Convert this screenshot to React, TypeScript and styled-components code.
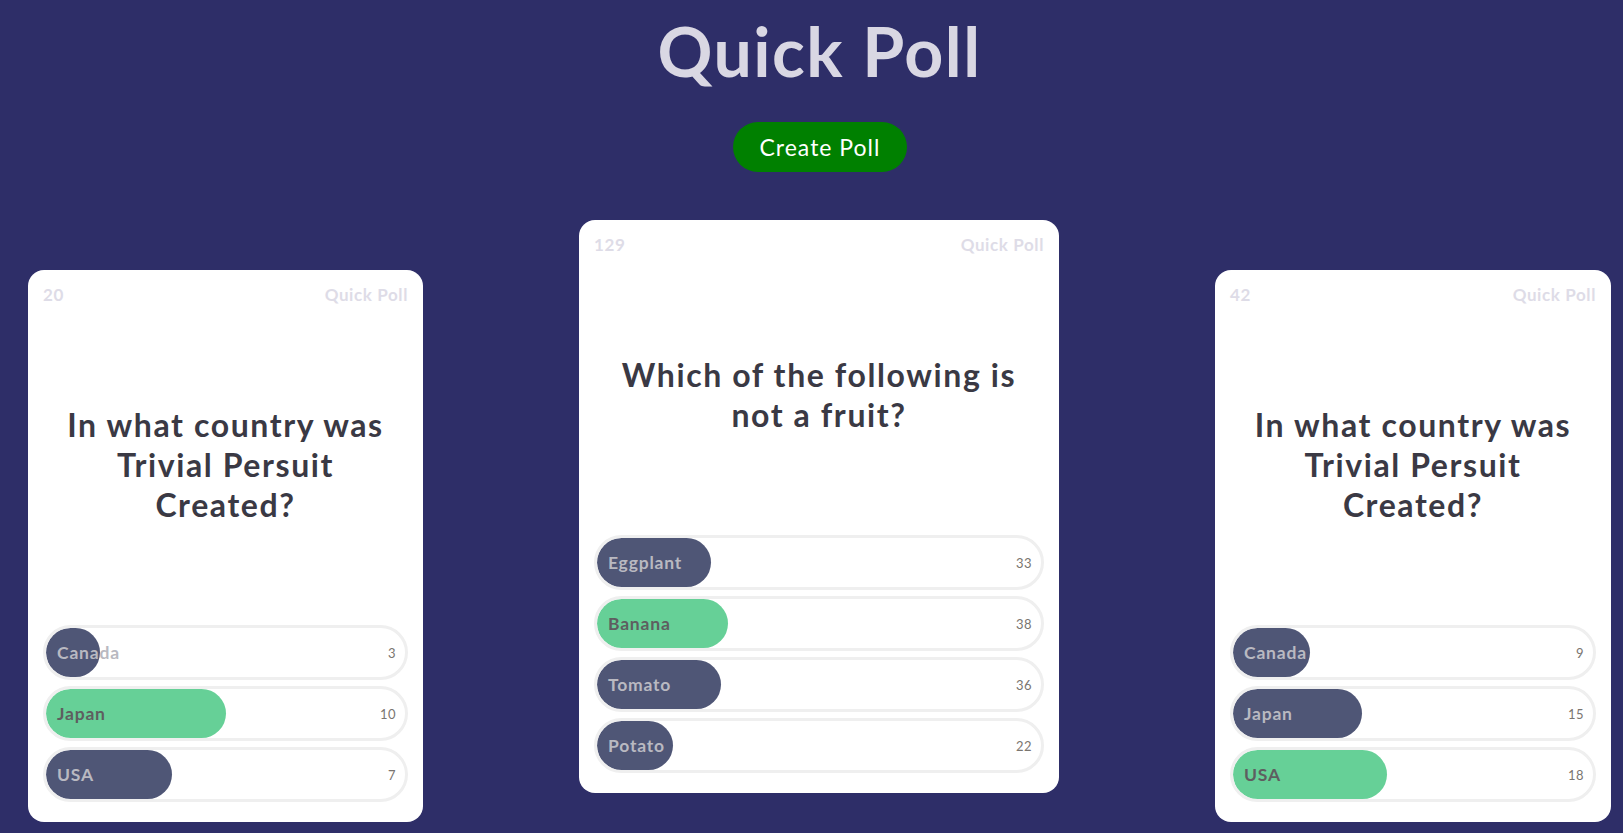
import React from "react";
import styled, { createGlobalStyle } from "styled-components";

const GlobalStyle = createGlobalStyle`
  html, body {
    margin: 0;
    padding: 0;
    background: #2e2e68;
    font-family: "Lato", "Noto Sans", sans-serif;
  }
  * { box-sizing: border-box; }
`;

const Page = styled.div`
  display: flex;
  flex-direction: column;
  align-items: center;
  min-height: 833px;
  overflow: hidden;
`;

const Title = styled.h1`
  margin: 11px 0 0 16px;
  font-size: 68px;
  line-height: 80px;
  font-weight: 700;
  color: #d9d7e3;
  letter-spacing: 1.5px;
`;

const CreateButton = styled.button`
  margin: 31px 0 0 17px;
  height: 50px;
  padding: 0 27px;
  border: none;
  border-radius: 25px;
  background: #008000;
  color: #ffffff;
  font-family: inherit;
  font-size: 23px;
  font-weight: 400;
  letter-spacing: 1px;
  cursor: pointer;
`;

const CardRow = styled.div`
  width: 100%;
  display: flex;
  align-items: flex-start;
  justify-content: space-between;
  padding: 0 12px 0 28px;
  margin-top: 48px;
`;

const Card = styled.div<{ $w: number; $h: number; $top: number }>`
  width: ${(p) => p.$w}px;
  height: ${(p) => p.$h}px;
  margin-top: ${(p) => p.$top}px;
  background: #ffffff;
  border-radius: 16px;
  display: flex;
  flex-direction: column;
  padding: 15px 15px 20px;
`;

const CardHeader = styled.div`
  display: flex;
  justify-content: space-between;
  font-size: 17px;
  font-weight: 700;
  line-height: 20px;
  letter-spacing: 0.6px;
  color: #dedce7;
`;

const QuestionArea = styled.div`
  flex: 1;
  display: flex;
  align-items: center;
  justify-content: center;
`;

const Question = styled.h2<{ $max: number }>`
  margin: 0;
  max-width: ${(p) => p.$max}px;
  text-align: center;
  font-size: 32px;
  line-height: 40px;
  font-weight: 700;
  letter-spacing: 1.6px;
  color: #3a3944;
`;

const Options = styled.div`
  display: flex;
  flex-direction: column;
  gap: 6px;
`;

const OptionRow = styled.div`
  position: relative;
  height: 55px;
  border: 3px solid #efefef;
  border-radius: 999px;
  display: flex;
  align-items: center;
  overflow: hidden;
`;

const Fill = styled.div<{ $win: boolean }>`
  position: absolute;
  left: 0;
  top: 0;
  bottom: 0;
  border-radius: 999px;
  background: ${(p) => (p.$win ? "#66d097" : "#4f5676")};
`;

const OptionLabel = styled.span<{ $win: boolean }>`
  position: relative;
  padding-left: 11px;
  font-size: 17.5px;
  font-weight: 700;
  letter-spacing: 0.8px;
  color: ${(p) => (p.$win ? "#5e5e60" : "#b9b9c1")};
`;

const OptionCount = styled.span`
  position: relative;
  margin-left: auto;
  padding-right: 9px;
  font-size: 13px;
  letter-spacing: 0.4px;
  color: #7a7570;
`;

type Poll = {
  total: number;
  question: string;
  max: number;
  options: { label: string; votes: number }[];
  w: number;
  h: number;
  top: number;
};

const polls: Poll[] = [
  {
    total: 20,
    question: "In what country was Trivial Persuit Created?",
    max: 335,
    options: [
      { label: "Canada", votes: 3 },
      { label: "Japan", votes: 10 },
      { label: "USA", votes: 7 },
    ],
    w: 395,
    h: 552,
    top: 50,
  },
  {
    total: 129,
    question: "Which of the following is not a fruit?",
    max: 420,
    options: [
      { label: "Eggplant", votes: 33 },
      { label: "Banana", votes: 38 },
      { label: "Tomato", votes: 36 },
      { label: "Potato", votes: 22 },
    ],
    w: 480,
    h: 573,
    top: 0,
  },
  {
    total: 42,
    question: "In what country was Trivial Persuit Created?",
    max: 335,
    options: [
      { label: "Canada", votes: 9 },
      { label: "Japan", votes: 15 },
      { label: "USA", votes: 18 },
    ],
    w: 396,
    h: 552,
    top: 50,
  },
];

function PollCard({ poll }: { poll: Poll }) {
  const best = Math.max(...poll.options.map((o) => o.votes));
  return (
    <Card $w={poll.w} $h={poll.h} $top={poll.top}>
      <CardHeader>
        <span>{poll.total}</span>
        <span>Quick Poll</span>
      </CardHeader>
      <QuestionArea>
        <Question $max={poll.max}>{poll.question}</Question>
      </QuestionArea>
      <Options>
        {poll.options.map((o) => {
          const win = o.votes === best;
          return (
            <OptionRow key={o.label}>
              <Fill $win={win} style={{ width: `${(o.votes / poll.total) * 100}%` }} />
              <OptionLabel $win={win}>{o.label}</OptionLabel>
              <OptionCount>{o.votes}</OptionCount>
            </OptionRow>
          );
        })}
      </Options>
    </Card>
  );
}

export default function App() {
  return (
    <>
      <GlobalStyle />
      <Page>
        <Title>Quick Poll</Title>
        <CreateButton>Create Poll</CreateButton>
        <CardRow>
          {polls.map((p, i) => (
            <PollCard key={i} poll={p} />
          ))}
        </CardRow>
      </Page>
    </>
  );
}
